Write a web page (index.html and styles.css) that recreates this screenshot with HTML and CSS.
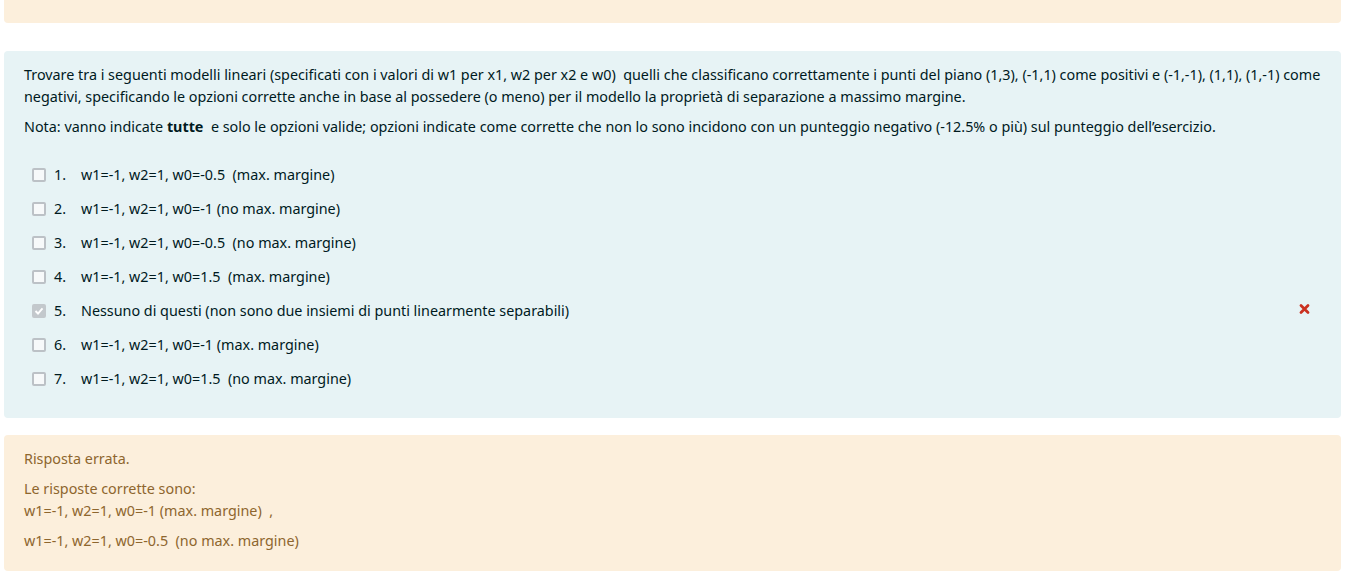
FILE: index.html
```html
<!DOCTYPE html>
<html lang="it">
<head>
<meta charset="utf-8">
<title>Domanda</title>
<link rel="stylesheet" href="styles.css">
</head>
<body>
<div class="page">
  <div class="box outcome top">
    <p>w1=-1, w2=1, w0=-1 (max. margine)</p>
  </div>

  <div class="box formulation">
    <p class="qtext">Trovare tra i seguenti modelli lineari (specificati con i valori di w1 per x1, w2 per x2 e w0)&nbsp; quelli che classificano correttamente i punti del piano (1,3), (-1,1) come positivi e (-1,-1), (1,1), (1,-1) come negativi, specificando le opzioni corrette anche in base al possedere (o meno) per il modello la proprietà di separazione a massimo margine.</p>
    <p class="qtext">Nota: vanno indicate <strong>tutte</strong>&nbsp; e solo le opzioni valide; opzioni indicate come corrette che non lo sono incidono con un punteggio negativo (-12.5% o più) sul punteggio dell’esercizio.</p>
    <div class="answers">
      <div class="opt"><span class="cb"></span><span class="num">1.</span><span class="lbl">w1=-1, w2=1, w0=-0.5&nbsp; (max. margine)</span></div>
      <div class="opt"><span class="cb"></span><span class="num">2.</span><span class="lbl">w1=-1, w2=1, w0=-1 (no max. margine)</span></div>
      <div class="opt"><span class="cb"></span><span class="num">3.</span><span class="lbl">w1=-1, w2=1, w0=-0.5&nbsp; (no max. margine)</span></div>
      <div class="opt"><span class="cb"></span><span class="num">4.</span><span class="lbl">w1=-1, w2=1, w0=1.5&nbsp; (max. margine)</span></div>
      <div class="opt"><span class="cb checked"><svg width="10" height="10" viewBox="0 0 10 10"><path d="M1.5 5 L4 7.5 L8.5 2.3" fill="none" stroke="#fff" stroke-width="1.9"/></svg></span><span class="num">5.</span><span class="lbl">Nessuno di questi (non sono due insiemi di punti linearmente separabili)</span>
        <svg class="wrong" width="11" height="12" viewBox="0 0 11 12"><path d="M2 2.5 L9 9.5 M9 2.5 L2 9.5" stroke="#ca3120" stroke-width="2.8" stroke-linecap="round"/></svg>
      </div>
      <div class="opt"><span class="cb"></span><span class="num">6.</span><span class="lbl">w1=-1, w2=1, w0=-1 (max. margine)</span></div>
      <div class="opt"><span class="cb"></span><span class="num">7.</span><span class="lbl">w1=-1, w2=1, w0=1.5&nbsp; (no max. margine)</span></div>
    </div>
  </div>

  <div class="box outcome">
    <p class="first">Risposta errata.</p>
    <p class="right">Le risposte corrette sono:<br>w1=-1, w2=1, w0=-1 (max. margine)&nbsp; ,</p>
    <p class="right2">w1=-1, w2=1, w0=-0.5&nbsp; (no max. margine)</p>
  </div>
</div>
</body>
</html>
```
FILE: styles.css
```css
html, body {
  margin: 0;
  padding: 0;
  background: #fff;
}
body {
  font-family: "Noto Sans", "Open Sans", sans-serif;
  font-size: 14.35px;
  line-height: 22px;
  color: #001a1e;
}
.page {
  padding: 0 5px 0 4px;
  display: flex;
  flex-direction: column;
}
.box {
  border-radius: 4px;
}
p { margin: 0; }
.outcome {
  background: #fcefdc;
  color: #8e662e;
  padding: 13px 20px 19px 20px;
  margin-bottom: 16px;
}
.top {
  margin-top: -40px;
  height: 33px;
  padding: 12px 20px 18px 20px;
  box-sizing: content-box;
  margin-bottom: 28px;
  overflow: hidden;
}
.top p { padding-top: 6px; }
.formulation {
  background: #e7f3f5;
  padding: 13px 20px 22px 20px;
  margin-bottom: 17px;
}
.qtext + .qtext { margin-top: 8px; }
.answers {
  margin-top: 20px;
  display: flex;
  flex-direction: column;
}
.opt {
  display: flex;
  align-items: center;
  height: 34px;
  padding-left: 8px;
}
.cb {
  box-sizing: border-box;
  width: 14px;
  height: 14px;
  border: 2px solid #bcc1c6;
  border-radius: 2px;
  background: #f7f9fa;
  margin-right: 8px;
  display: flex;
  align-items: center;
  justify-content: center;
}
.cb.checked {
  background: #c3c8cc;
  border-color: #c3c8cc;
}
.num { width: 27px; }
.lbl { flex: 1; }
.wrong { margin-right: 11px; margin-top: -5px; }
.first { margin-bottom: 8px; }
.right2 { margin-top: 8px; }
```
